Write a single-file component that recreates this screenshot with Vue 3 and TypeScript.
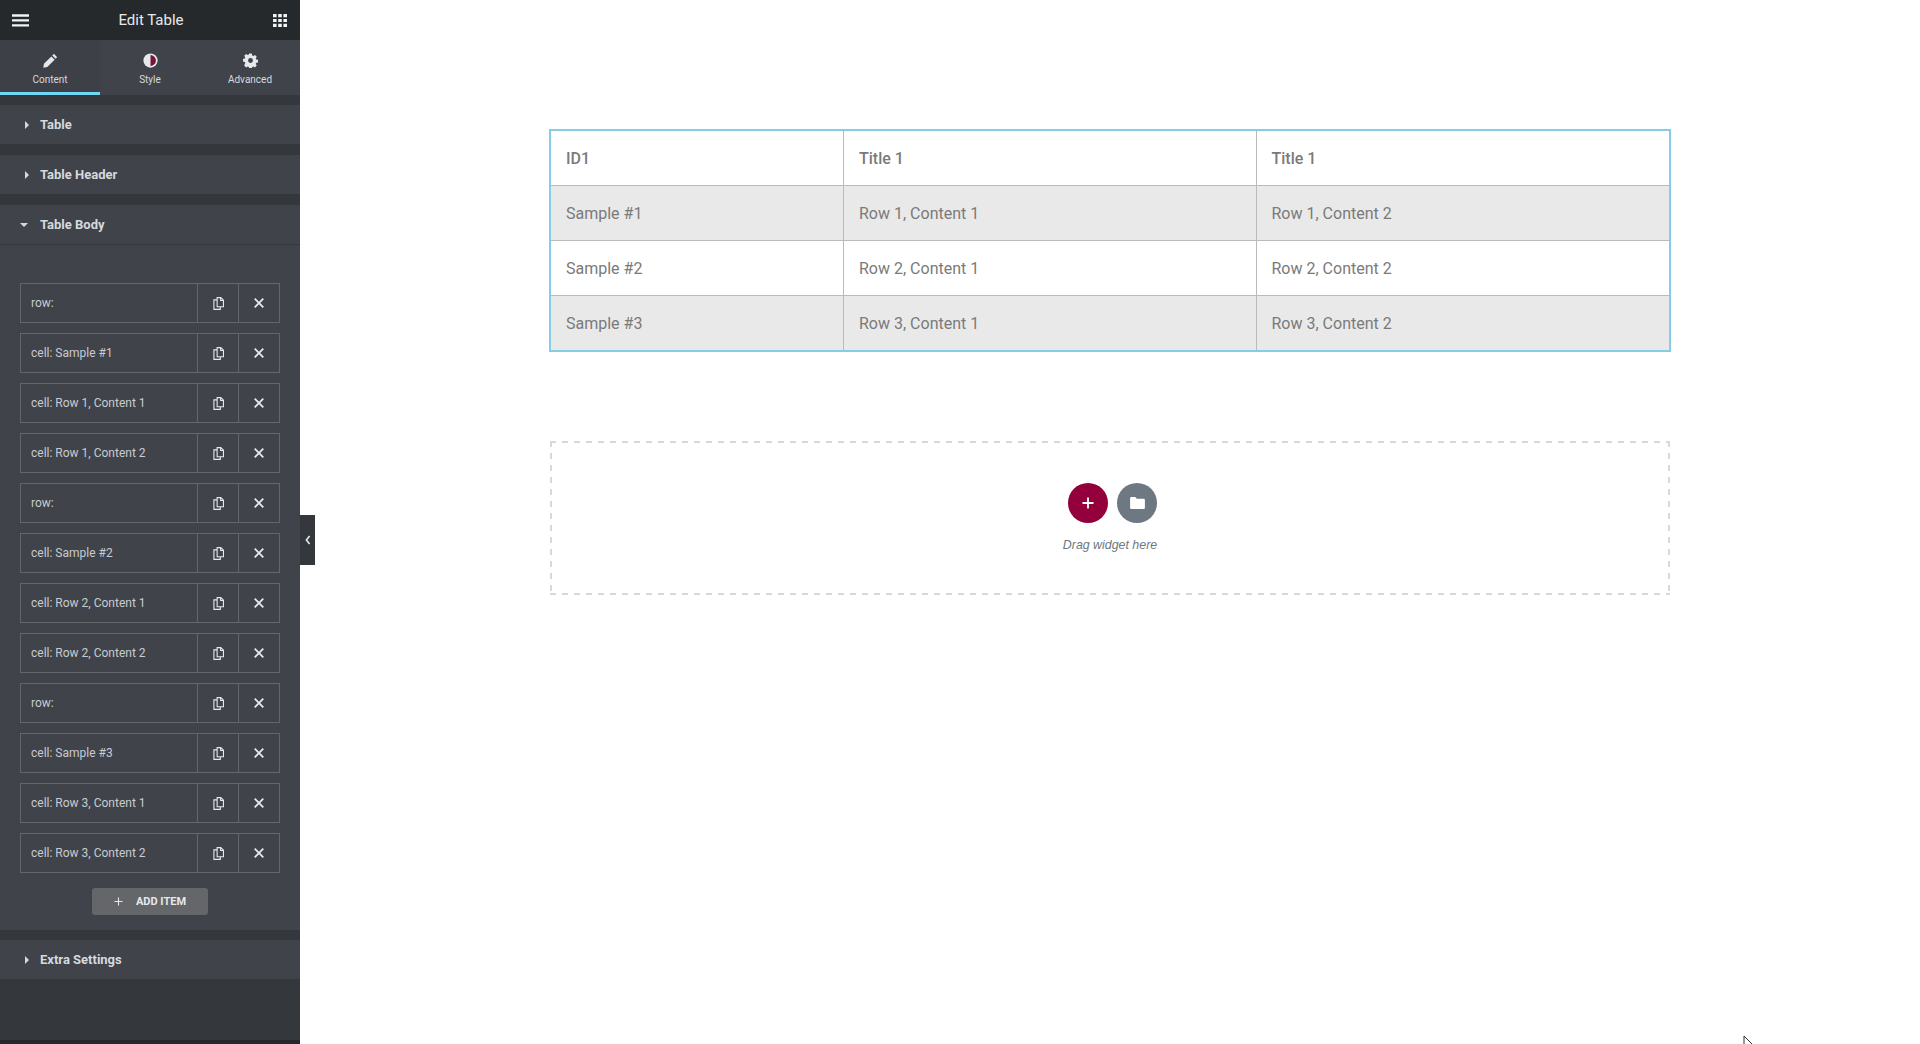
<template>
  <div class="editor">
    <aside class="panel">
      <header class="panel-header">
        <svg class="menu-icon" viewBox="0 0 18 13"><path d="M0 0h18v2.4H0zM0 5.2h18v2.4H0zM0 10.4h18v2.4H0z"/></svg>
        <h1>Edit Table</h1>
        <svg class="grid-icon" viewBox="0 0 14 13"><path d="M0 0h3.6v3.2H0zM5.2 0h3.6v3.2H5.2zM10.4 0H14v3.2h-3.6zM0 4.9h3.6v3.2H0zM5.2 4.9h3.6v3.2H5.2zM10.4 4.9H14v3.2h-3.6zM0 9.8h3.6V13H0zM5.2 9.8h3.6V13H5.2zM10.4 9.8H14V13h-3.6z"/></svg>
      </header>

      <nav class="tabs">
        <button class="tab active" type="button">
          <svg viewBox="0 0 16 16"><path d="M11.6.9l3.5 3.5-1.7 1.7-3.5-3.5zM8.9 3.6l3.5 3.5-7.9 7.9-4.2.7.7-4.2z"/></svg>
          <span>Content</span>
        </button>
        <button class="tab" type="button">
          <svg viewBox="0 0 16 16"><circle cx="8" cy="8" r="7.6" fill="#e6e9ec"/><path d="M8 2.2a5.8 5.8 0 0 1 0 11.6z" fill="#7c1239"/></svg>
          <span>Style</span>
        </button>
        <button class="tab" type="button">
          <svg viewBox="0 0 16 16"><path fill-rule="evenodd" d="M6.6.6h2.8l.4 2 1.2.5 1.7-1.1 2 2-1.1 1.7.5 1.2 2 .4v2.8l-2 .4-.5 1.2 1.1 1.7-2 2-1.7-1.1-1.2.5-.4 2H6.6l-.4-2-1.2-.5-1.7 1.1-2-2L2.4 10.7l-.5-1.2-2-.4V6.3l2-.4.5-1.2L1.3 3l2-2L5 2.1l1.2-.5zM8 5.4a2.6 2.6 0 1 0 0 5.2 2.6 2.6 0 0 0 0-5.2z"/></svg>
          <span>Advanced</span>
        </button>
      </nav>

      <div class="panel-body">
        <div v-for="name in ['Table', 'Table Header']" :key="name" class="section">
          <i class="caret"></i>
          <span>{{ name }}</span>
        </div>

        <div class="section open">
          <i class="caret down"></i>
          <span>Table Body</span>
        </div>

        <div class="repeater">
          <div v-for="(item, i) in items" :key="i" class="repeater-row">
            <div class="row-title">{{ item }}</div>
            <button class="row-tool" type="button" aria-label="Duplicate">
              <svg class="copy-icon" viewBox="0 0 12 14"><path d="M4.5.6h4l2.9 2.9v7H4.5zM8.3.8v2.9h2.9M4.5 3H1v10.4h7v-2.9"/></svg>
            </button>
            <button class="row-tool" type="button" aria-label="Remove">
              <svg class="close-icon" viewBox="0 0 10 10"><path d="M.7.7l8.6 8.6M9.3.7L.7 9.3"/></svg>
            </button>
          </div>
          <button class="add-item" type="button">
            <svg viewBox="0 0 10 10"><path d="M5 .5v9M.5 5h9"/></svg>
            <span>ADD ITEM</span>
          </button>
        </div>

        <div class="section extra">
          <i class="caret"></i>
          <span>Extra Settings</span>
        </div>
      </div>
      <div class="panel-foot"></div>

      <div class="collapse-handle">
        <svg viewBox="0 0 6 10"><path d="M4.6 1L1.4 5l3.2 4"/></svg>
      </div>
    </aside>

    <main class="canvas">
      <table class="data-table">
        <colgroup>
          <col class="col-id" />
          <col />
          <col />
        </colgroup>
        <thead>
          <tr>
            <th>ID1</th>
            <th>Title 1</th>
            <th>Title 1</th>
          </tr>
        </thead>
        <tbody>
          <tr v-for="row in rows" :key="row[0]">
            <td v-for="cell in row" :key="cell">{{ cell }}</td>
          </tr>
        </tbody>
      </table>

      <section class="dropzone">
        <div class="drop-buttons">
          <button class="round add" type="button" aria-label="Add section">
            <svg viewBox="0 0 12 12"><path d="M6 .5v11M.5 6h11"/></svg>
          </button>
          <button class="round template" type="button" aria-label="Add template">
            <svg viewBox="0 0 16 13"><path d="M0 1.4C0 .6.6 0 1.4 0h4.2l1.7 1.9h7.3c.8 0 1.4.6 1.4 1.4v8.3c0 .8-.6 1.4-1.4 1.4H1.4C.6 13 0 12.4 0 11.6z"/></svg>
          </button>
        </div>
        <p>Drag widget here</p>
      </section>
    </main>

    <svg class="cursor" viewBox="0 0 10 9"><path d="M1 9V1l8 8"/></svg>
  </div>
</template>

<script setup lang="ts">
const rows: string[][] = [1, 2, 3].map(n => [
  `Sample #${n}`,
  `Row ${n}, Content 1`,
  `Row ${n}, Content 2`,
])

const items: string[] = rows.flatMap(row => ['row:', ...row.map(cell => `cell: ${cell}`)])
</script>

<style>
html, body { margin: 0; background: #fff; }
</style>

<style scoped>
.editor {
  position: relative;
  display: flex;
  height: 100vh;
  overflow: hidden;
  font-family: Roboto, "Liberation Sans", sans-serif;
  background: #fff;
}

button {
  border: none;
  padding: 0;
  background: none;
  font: inherit;
  color: inherit;
  cursor: pointer;
}

/* panel */
.panel {
  position: relative;
  display: flex;
  flex-direction: column;
  flex: 0 0 300px;
  width: 300px;
  color: #d5dadf;
  background: #34383c;
}

.panel-header {
  display: flex;
  align-items: center;
  justify-content: space-between;
  flex: 0 0 40px;
  padding: 0 13px 0 12px;
  background: #26292c;
}
.panel-header h1 {
  margin: 0;
  font-size: 15px;
  font-weight: 400;
  color: #e6e9ec;
}
.menu-icon { width: 17px; height: 13px; fill: #f1f3f5; }
.grid-icon { width: 14px; height: 13px; fill: #f1f3f5; }

.tabs {
  display: flex;
  flex: 0 0 55px;
  background: #404349;
}
.tab {
  display: flex;
  flex: 1;
  flex-direction: column;
  align-items: center;
  padding-top: 13px;
  border-bottom: 3px solid transparent;
  color: #d5dadf;
  font-size: 10px;
}
.tab svg { width: 15px; height: 15px; fill: #e6e9ec; }
.tab span { margin-top: 6px; line-height: 12px; }
.tab.active {
  border-bottom-color: #71d7f7;
  background: #3d4047;
}

.panel-body {
  flex: 1;
  padding-top: 10px;
}

.section {
  display: flex;
  align-items: center;
  height: 39px;
  margin-bottom: 11px;
  padding-left: 25px;
  background: #404349;
  font-size: 13px;
  font-weight: 700;
  color: #d5dadf;
}
.section .caret {
  width: 0;
  height: 0;
  margin-right: 11px;
  border-top: 4px solid transparent;
  border-bottom: 4px solid transparent;
  border-left: 4px solid #d5dadf;
}
.section .caret.down {
  margin-left: -5px;
  margin-right: 12px;
  border-top: 4px solid #d5dadf;
  border-bottom: 0;
  border-left: 4px solid transparent;
  border-right: 4px solid transparent;
}
.section.open {
  height: 40px;
  margin-bottom: 0;
  border-bottom: 1px solid #34383c;
  box-sizing: border-box;
}
.section.extra { margin: 10px 0 0; }

.repeater {
  display: flex;
  flex-direction: column;
  gap: 10px;
  padding: 38px 20px 15px;
  background: #404349;
}
.repeater-row {
  display: flex;
  height: 40px;
  box-sizing: border-box;
  border: 1px solid #64666a;
}
.row-title {
  flex: 1;
  display: flex;
  align-items: center;
  padding-left: 10px;
  padding-bottom: 1px;
  font-size: 12px;
  color: #c7ccd1;
}
.row-tool {
  display: flex;
  align-items: center;
  justify-content: center;
  flex: 0 0 41px;
  border-left: 1px solid #64666a;
}
.copy-icon {
  width: 11px;
  height: 13px;
  fill: none;
  stroke: #e6e9ec;
  stroke-width: 1.2;
}
.close-icon {
  width: 10px;
  height: 10px;
  fill: none;
  stroke: #e6e9ec;
  stroke-width: 1.8;
}
.add-item {
  display: flex;
  align-items: center;
  justify-content: center;
  gap: 13px;
  align-self: center;
  width: 116px;
  height: 27px;
  margin-top: 5px;
  border-radius: 3px;
  background: #64666a;
  color: #e6e9ec;
  font-size: 11px;
  font-weight: 700;
}
.add-item svg {
  width: 9px;
  height: 9px;
  fill: none;
  stroke: #e6e9ec;
  stroke-width: 1.2;
}

.panel-foot {
  flex: 0 0 4px;
  background: #26292c;
}

.collapse-handle {
  position: absolute;
  top: 515px;
  left: 300px;
  display: flex;
  align-items: center;
  justify-content: center;
  width: 15px;
  height: 50px;
  background: #34383c;
}
.collapse-handle svg {
  width: 6px;
  height: 10px;
  fill: none;
  stroke: #e6e9ec;
  stroke-width: 1.6;
}

/* canvas */
.canvas {
  flex: 1;
  min-width: 0;
  padding: 129px 249px 0 249px;
}

.data-table {
  width: 100%;
  table-layout: fixed;
  border-collapse: separate;
  border-spacing: 0;
  border: 2px solid #86cde3;
  color: #7a7a7a;
  font-size: 16px;
}
.col-id { width: 293px; }
.data-table th,
.data-table td {
  box-sizing: border-box;
  height: 55px;
  padding: 0 15px;
  text-align: left;
  border-right: 1px solid #bbb;
  border-bottom: 1px solid #bbb;
}
.data-table th { font-weight: 500; }
.data-table td { font-weight: 400; }
.data-table th:last-child,
.data-table td:last-child { border-right: none; }
.data-table tbody tr:last-child td { height: 54px; border-bottom: none; }
.data-table tbody tr:nth-child(odd) td { background: #e9e9e9; }

.dropzone {
  box-sizing: border-box;
  height: 154px;
  margin: 89px 1px 0;
  padding-top: 42px;
  text-align: center;
  background:
    repeating-linear-gradient(90deg, #d5d8dc 0 6px, transparent 6px 12px) left top / 100% 2px no-repeat,
    repeating-linear-gradient(90deg, #d5d8dc 0 6px, transparent 6px 12px) left bottom / 100% 2px no-repeat,
    repeating-linear-gradient(180deg, #d5d8dc 0 6px, transparent 6px 12px) left top / 2px 100% no-repeat,
    repeating-linear-gradient(180deg, #d5d8dc 0 6px, transparent 6px 12px) right top / 2px 100% no-repeat;
}
.drop-buttons {
  display: flex;
  justify-content: center;
  gap: 9px;
  margin-left: 5px;
}
.round {
  display: flex;
  align-items: center;
  justify-content: center;
  width: 40px;
  height: 40px;
  border-radius: 50%;
}
.round.add { background: #93003c; }
.round.add svg {
  width: 12px;
  height: 12px;
  fill: none;
  stroke: #fff;
  stroke-width: 1.8;
}
.round.template { background: #6d7882; }
.round.template svg { width: 15px; height: 12px; fill: #fff; }
.dropzone p {
  margin: 15px 0 0;
  font-family: "Liberation Sans", Arial, sans-serif;
  font-size: 12.4px;
  font-style: italic;
  line-height: 14px;
  color: #6d7882;
}

.cursor {
  position: absolute;
  left: 1743px;
  top: 1035px;
  width: 10px;
  height: 9px;
  fill: none;
  stroke: #333;
  stroke-width: 1;
}
</style>
